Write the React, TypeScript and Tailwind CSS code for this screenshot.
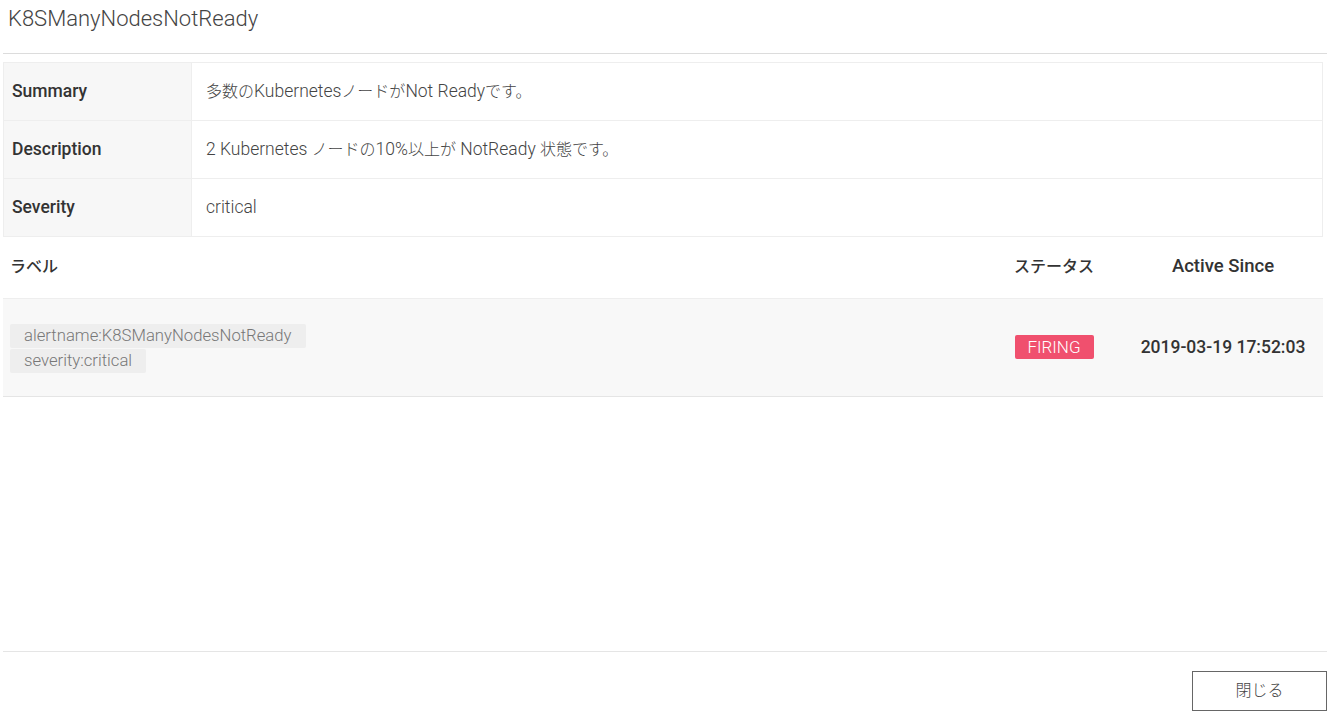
// Latin text in the reference renders larger than the Japanese runs, so JP runs get their own size
function J({ children }: { children: React.ReactNode }) {
  return <span className="text-[16px]">{children}</span>;
}

const details = [
  {
    label: "Summary",
    value: (
      <>
        <J>多数の</J>Kubernetes<J>ノードが</J>Not Ready<J>です。</J>
      </>
    ),
  },
  {
    label: "Description",
    value: (
      <>
        2 Kubernetes <J>ノードの</J>10%<J>以上が</J> NotReady <J>状態です。</J>
      </>
    ),
  },
  { label: "Severity", value: <>critical</> },
];

const labels = ["alertname:K8SManyNodesNotReady", "severity:critical"];

export default function App() {
  return (
    <div
      className="w-[1335px] h-[718px] bg-white text-[#333] flex flex-col"
      style={{ fontFamily: 'Roboto, "Noto Sans CJK JP", sans-serif' }}
    >
      {/* Header */}
      <div className="mx-[3px] w-[1324px] h-[54px] border-b border-[#dcdcdc] px-[5px] pt-[4px]">
        <h1 className="text-[22px] font-light text-[#444] leading-[30px]">K8SManyNodesNotReady</h1>
      </div>

      {/* Body */}
      <div className="flex-1 pl-[3px] pr-[12px] pt-[8px]">
        <table className="w-full border-collapse border border-[#eee]">
          <tbody>
            {details.map((row) => (
              <tr key={row.label} className="h-[58px]">
                <td className="w-[188px] bg-[#f7f7f7] border border-[#eee] px-[8px] text-[17.5px] font-medium text-[#333]">
                  {row.label}
                </td>
                <td className="border border-[#eee] px-[14px] text-[17.5px] font-light text-[#444]">{row.value}</td>
              </tr>
            ))}
          </tbody>
        </table>

        <table className="w-full border-collapse">
          <thead>
            <tr className="h-[61px] border-b border-[#eee]">
              <th className="text-left px-[7px] text-[16px] font-medium text-[#333]">ラベル</th>
              <th className="w-[138px] text-center text-[16px] font-medium text-[#333]">ステータス</th>
              <th className="w-[200px] text-center text-[18.5px] font-medium text-[#333]">Active Since</th>
            </tr>
          </thead>
          <tbody>
            <tr className="h-[98px] bg-[#f8f8f8] border-b border-[#e5e5e5]">
              <td className="px-[7px]">
                <div className="flex flex-col items-start gap-[1px] pt-[2px]">
                  {labels.map((l) => (
                    <span
                      key={l}
                      className="bg-[#eeeeee] rounded-[2px] px-[14px] h-[24px] leading-[24px] text-[16.7px] font-light text-[#777]"
                    >
                      {l}
                    </span>
                  ))}
                </div>
              </td>
              <td className="text-center">
                <span className="inline-block bg-[#f0506e] text-white rounded-[2px] w-[79px] h-[24px] leading-[24px] text-[17px] font-light">
                  FIRING
                </span>
              </td>
              <td className="text-center text-[17.5px] font-medium text-[#333]">2019-03-19 17:52:03</td>
            </tr>
          </tbody>
        </table>
      </div>

      {/* Footer */}
      <div className="mx-[3px] w-[1324px] border-t border-[#e5e5e5] pt-[19px] pb-[7px] flex justify-end">
        <button className="w-[135px] h-[40px] border border-[#666] bg-white text-[16px] font-light text-[#444]">
          閉じる
        </button>
      </div>
    </div>
  );
}
